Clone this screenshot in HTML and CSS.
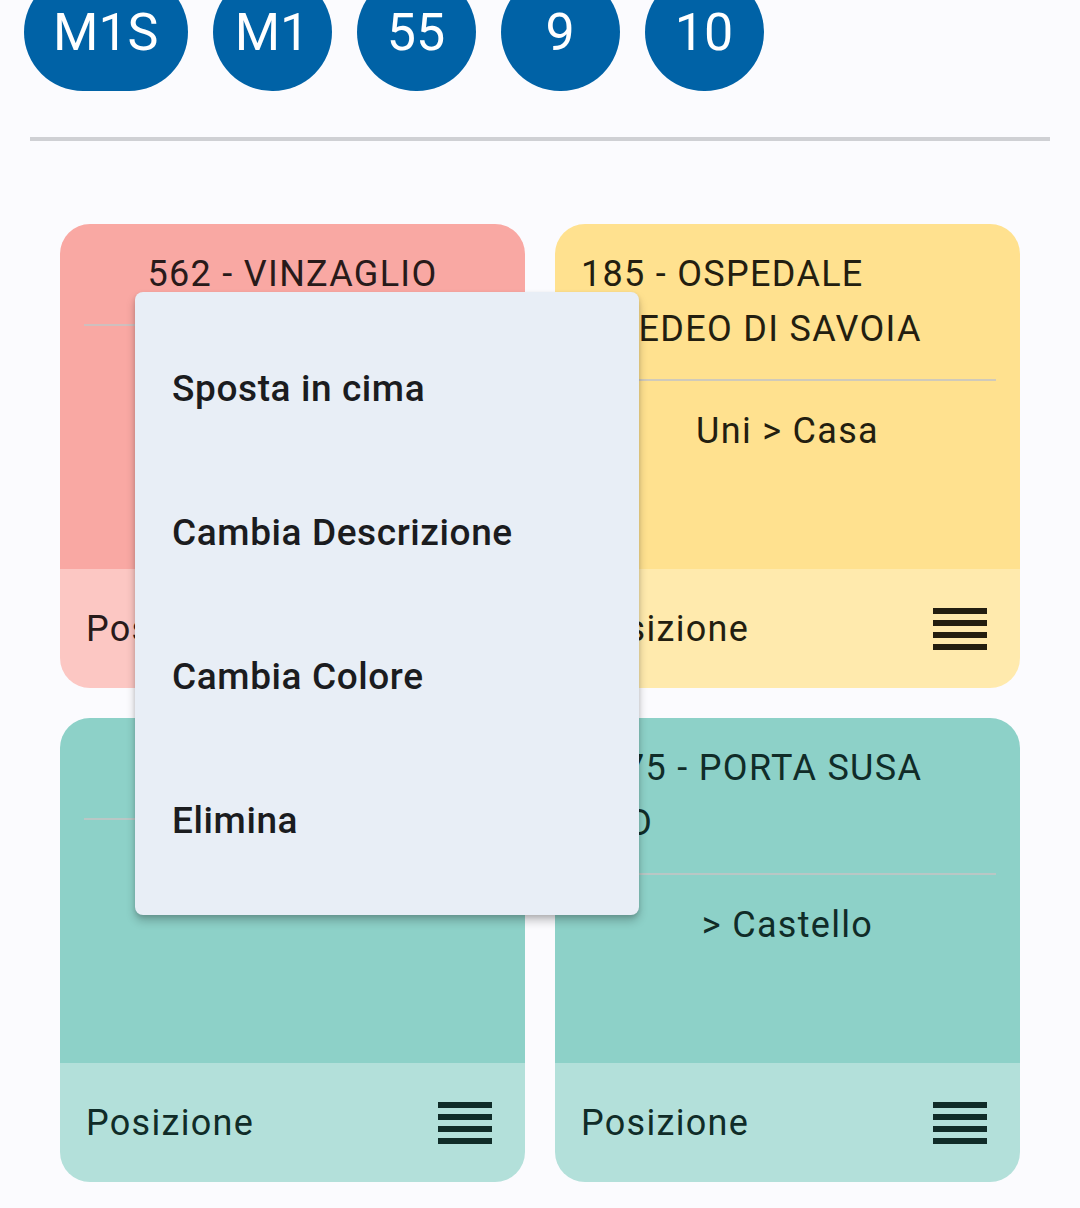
FILE: index.html
```html
<!DOCTYPE html>
<html lang="it">
<head>
<meta charset="utf-8">
<title>Fermate</title>
<link rel="stylesheet" href="styles.css">
</head>
<body>
<div class="page">
  <div class="lines">
    <div class="pill pill-wide">M1S</div>
    <div class="pill">M1</div>
    <div class="pill">55</div>
    <div class="pill">9</div>
    <div class="pill">10</div>
  </div>
  <div class="sep"></div>
  <div class="grid">
    <div class="card red">
      <div class="card-body">
        <div class="title">562 - VINZAGLIO</div>
        <div class="divider"></div>
        <div class="sub">Casa &gt; Uni</div>
      </div>
      <div class="card-foot">
        <span>Posizione</span>
        <svg class="reorder" viewBox="0 0 24 24"><path d="M3 15h18v-2H3v2zm0 4h18v-2H3v2zm0-8h18V9H3v2zm0-6v2h18V5H3z"/></svg>
      </div>
    </div>
    <div class="card yellow">
      <div class="card-body">
        <div class="title">185 - OSPEDALE AMEDEO DI SAVOIA</div>
        <div class="divider"></div>
        <div class="sub">Uni &gt; Casa</div>
      </div>
      <div class="card-foot">
        <span>Posizione</span>
        <svg class="reorder" viewBox="0 0 24 24"><path d="M3 15h18v-2H3v2zm0 4h18v-2H3v2zm0-8h18V9H3v2zm0-6v2h18V5H3z"/></svg>
      </div>
    </div>
    <div class="card teal">
      <div class="card-body">
        <div class="title">3362 - CASTELLO</div>
        <div class="divider"></div>
        <div class="sub">Castello &gt;</div>
      </div>
      <div class="card-foot">
        <span>Posizione</span>
        <svg class="reorder" viewBox="0 0 24 24"><path d="M3 15h18v-2H3v2zm0 4h18v-2H3v2zm0-8h18V9H3v2zm0-6v2h18V5H3z"/></svg>
      </div>
    </div>
    <div class="card teal">
      <div class="card-body">
        <div class="title">1475 - PORTA SUSA SUD</div>
        <div class="divider"></div>
        <div class="sub">&gt; Castello</div>
      </div>
      <div class="card-foot">
        <span>Posizione</span>
        <svg class="reorder" viewBox="0 0 24 24"><path d="M3 15h18v-2H3v2zm0 4h18v-2H3v2zm0-8h18V9H3v2zm0-6v2h18V5H3z"/></svg>
      </div>
    </div>
  </div>

  <div class="menu">
    <div class="menu-item">Sposta in cima</div>
    <div class="menu-item">Cambia Descrizione</div>
    <div class="menu-item">Cambia Colore</div>
    <div class="menu-item">Elimina</div>
  </div>
</div>
</body>
</html>
```
FILE: styles.css
```css
html, body {
  margin: 0;
  padding: 0;
  background: #fbfbfe;
}
body {
  font-family: Roboto, "Noto Sans", Arial, sans-serif;
  overflow: hidden;
  height: 1208px;
}
.page {
  position: relative;
  width: 1080px;
  height: 1208px;
  overflow: hidden;
}
.lines {
  display: flex;
  gap: 25px;
  padding-left: 24px;
  margin-top: -27px;
}
.pill {
  height: 118px;
  min-width: 119px;
  box-sizing: border-box;
  padding: 0 22px;
  border-radius: 59px;
  background: #0062a6;
  color: #ffffff;
  font-size: 52px;
  display: flex;
  align-items: center;
  justify-content: center;
}
.pill-wide {
  padding: 0 29px;
}
.sep {
  margin: 46px 30px 0;
  height: 4px;
  background: #cfd0d4;
}
.grid {
  margin-top: 83px;
  padding: 0 60px;
  display: grid;
  grid-template-columns: 465px 465px;
  grid-auto-rows: 464px;
  gap: 30px;
}
.card {
  border-radius: 30px;
  overflow: hidden;
  display: flex;
  flex-direction: column;
}
.card-body {
  flex: 1;
  padding: 23px 24px 0;
}
.title {
  width: fit-content;
  max-width: 100%;
  margin: 0 auto;
  padding: 0 2px;
  box-sizing: border-box;
  font-size: 36px;
  line-height: 55px;
  letter-spacing: 1.3px;
}
.divider {
  margin-top: 22px;
  height: 2px;
  background: rgba(196, 196, 196, 0.8);
}
.sub {
  margin-top: 23px;
  text-align: center;
  font-size: 36px;
  line-height: 55px;
  letter-spacing: 1.3px;
}
.card-foot {
  height: 119px;
  flex: none;
  display: flex;
  align-items: center;
  justify-content: space-between;
  padding: 0 24px 0 26px;
  font-size: 36px;
  letter-spacing: 1.3px;
}
.reorder {
  width: 72px;
  height: 72px;
  fill: currentColor;
}
.red .card-body { background: #f9a8a3; }
.red .card-foot { background: #fcc7c3; }
.red { color: #281a1a; }
.yellow .card-body { background: #ffe18f; }
.yellow .card-foot { background: #ffeaad; }
.yellow { color: #231e10; }
.teal .card-body { background: #8dd1c8; }
.teal .card-foot { background: #b3e0da; }
.teal { color: #102c28; }

.menu {
  position: absolute;
  left: 135px;
  top: 292px;
  width: 504px;
  height: 623px;
  box-sizing: border-box;
  padding: 24px 0;
  background: #e8eef6;
  border-radius: 8px;
  box-shadow: 0 6px 10px rgba(0, 0, 0, 0.22), 0 2px 4px rgba(0, 0, 0, 0.12);
}
.menu-item {
  height: 144px;
  display: flex;
  align-items: center;
  padding-left: 37px;
  font-size: 37px;
  font-weight: 500;
  color: #1b1c1f;
  letter-spacing: 0.6px;
}
```
